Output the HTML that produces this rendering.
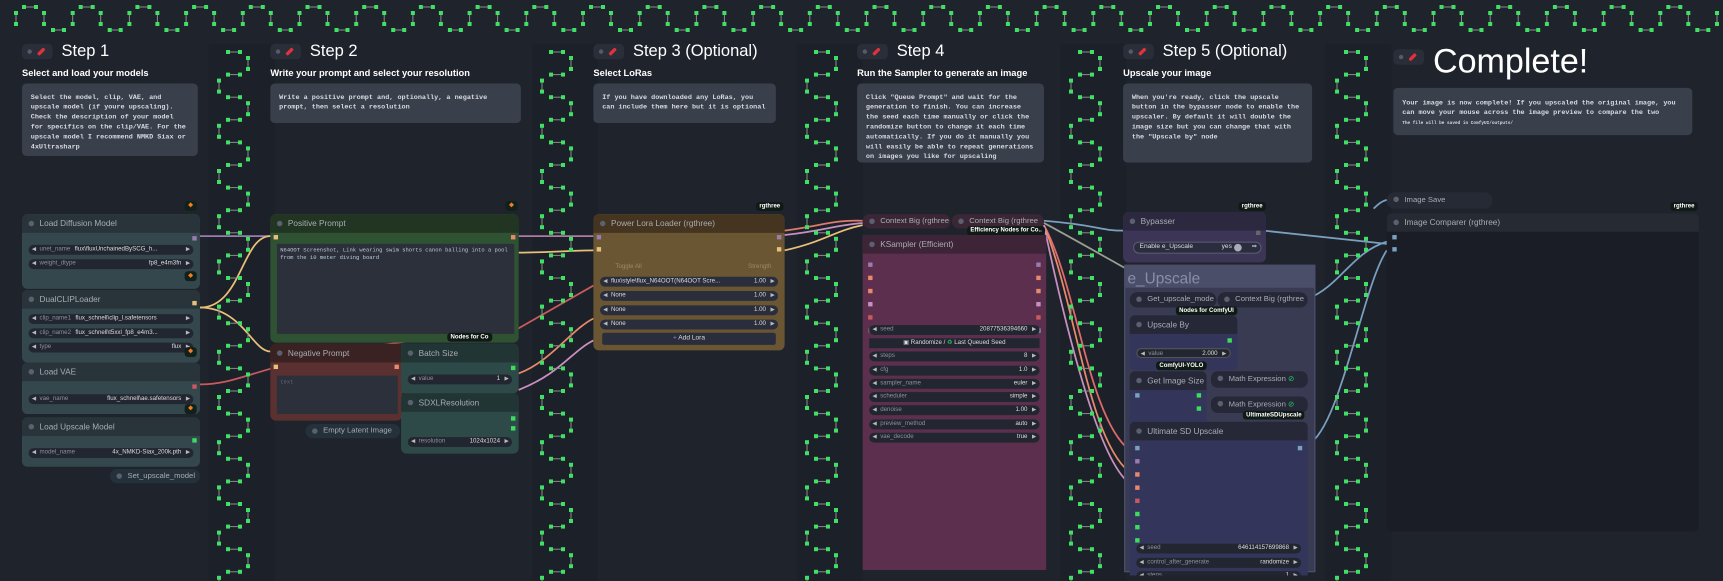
<!DOCTYPE html>
<html><head><meta charset="utf-8">
<style>
*{margin:0;padding:0;box-sizing:border-box}
html,body{width:1723px;height:581px;overflow:hidden;background:#1f232c}
#w{position:absolute;left:0;top:0;width:1568px;height:529px;transform:scale(1.0989,1.0983);transform-origin:0 0;font-family:"Liberation Sans",sans-serif}
.a{position:absolute}
.pill{position:absolute;width:28px;height:14px;background:#2a2e38;border-radius:4px}
.pill:before{content:"";position:absolute;left:5px;top:5px;width:4px;height:4px;border-radius:50%;background:#555b6a}
.pill:after{content:"";position:absolute;left:16px;top:3px;width:3px;height:8px;background:#e0323c;transform:rotate(45deg);border-radius:1px}
.st{position:absolute;color:#fff;font-size:15px}
.sub{position:absolute;color:#fff;font-size:8.5px;font-weight:bold}
.note{position:absolute;background:#3a3f4c;border-radius:4px;color:#d8dae0;font-family:"Liberation Mono",monospace;font-size:6.2px;line-height:9px;padding:8px 8px;font-weight:bold}
.node{position:absolute;border-radius:5px;overflow:hidden}
.hd{height:17px;font-size:7.5px;color:#a8acb4;line-height:17px;padding-left:16px;position:relative;white-space:nowrap}
.hd:before{content:"";position:absolute;left:6px;top:6px;width:5px;height:5px;border-radius:50%;background:#5a6070}
.pl .hd:before{top:4px}
.wd{position:absolute;left:6px;right:6px;height:9px;background:#222630;border-radius:5px;font-size:5.6px;color:#8c909a;line-height:9px;padding:0 10px;white-space:nowrap}
.wd:before{content:"◀";position:absolute;left:3px;font-size:5px;color:#bbb}
.wd:after{content:"▶";position:absolute;right:3px;font-size:5px;color:#bbb}
.wd b{position:absolute;right:11px;color:#ddd;font-weight:normal}
.wd i{font-style:normal;color:#ddd;margin-left:4px}
.sl{position:absolute;width:4px;height:4px}
.tag{position:absolute;background:#0f1a14;color:#fff;font-size:5.5px;border-radius:3px;padding:1px 3px;font-weight:bold}
.fox{position:absolute;width:11px;height:9px;background:#10201a;border-radius:3px;color:#f57c1f;font-size:6px;text-align:center;line-height:9px}
</style></head><body>
<div id="w">
<div class="a" style="left:190px;top:40px;width:60px;height:489px;background:#1c2028"></div>
<div class="a" style="left:484px;top:40px;width:60px;height:489px;background:#1c2028"></div>
<div class="a" style="left:725px;top:40px;width:60px;height:489px;background:#1c2028"></div>
<div class="a" style="left:965px;top:40px;width:60px;height:489px;background:#1c2028"></div>
<div class="a" style="left:1206px;top:40px;width:60px;height:489px;background:#1c2028"></div>

<svg class="a" style="left:0;top:0" width="1568" height="529">
<g fill="none" stroke-width="1.6">
<path d="M182 215 L246 215" stroke="#9a7cb0"/>
<path d="M182 280 C220 280 220 215 246 215" stroke="#e8c07a"/>
<path d="M182 280 C220 280 230 320 246 320" stroke="#e8c07a"/>
<path d="M182 350 C230 350 240 320 470 300 L540 260" stroke="#c85a5e"/>
<path d="M472 215 L540 215" stroke="#b07aa0"/>
<path d="M472 230 C500 230 520 228 540 228" stroke="#e8c07a"/>
<path d="M472 340 C500 330 520 300 540 290" stroke="#e88a6a"/>
<path d="M472 355 C510 340 520 320 540 310" stroke="#c890c0"/>
<path d="M714 210 C750 205 760 200 785 201" stroke="#e07a6a"/>
<path d="M714 214 C750 210 760 205 785 203" stroke="#c890c0"/>
<path d="M714 228 C750 220 760 210 785 205" stroke="#e8c07a"/>
<path d="M950 201 C1000 205 1000 210 1022 210" stroke="#7aa0c0"/>
<path d="M1150 210 L1262 222" stroke="#7aa0c0"/>
<path d="M950 205 C980 260 990 380 1028 410" stroke="#e06a6a"/>
<path d="M950 205 C980 280 990 400 1028 430" stroke="#e88a6a"/>
<path d="M950 205 C970 300 1000 420 1028 440" stroke="#c890c0"/>
<path d="M1190 272 C1220 260 1230 230 1262 220" stroke="#7aa0c0"/>
<path d="M1190 405 C1220 390 1240 260 1262 228" stroke="#7aa0c0"/>
<path d="M1250 190 C1255 185 1258 183 1262 182" stroke="#7aa0c0"/>
<path d="M950 203 C1000 230 1050 260 1090 280" stroke="#9aa090"/>
</g></svg>

<div class="pill" style="left:20px;top:40px"></div><div class="st" style="left:56px;top:38px">Step 1</div>
<div class="sub" style="left:20px;top:61px">Select and load your models</div>
<div class="note" style="left:20px;top:76px;width:160px;height:66px">Select the model, clip, VAE, and upscale model (if youre upscaling). Check the description of your model for specifics on the clip/VAE. For the upscale model I recommend NMKD Siax or 4xUltrasharp</div>

<div class="pill" style="left:246px;top:40px"></div><div class="st" style="left:282px;top:38px">Step 2</div>
<div class="sub" style="left:246px;top:61px">Write your prompt and select your resolution</div>
<div class="note" style="left:246px;top:76px;width:228px;height:36px">Write a positive prompt and, optionally, a negative prompt, then select a resolution</div>

<div class="pill" style="left:540px;top:40px"></div><div class="st" style="left:576px;top:38px">Step 3 (Optional)</div>
<div class="sub" style="left:540px;top:61px">Select LoRas</div>
<div class="note" style="left:540px;top:76px;width:166px;height:36px">If you have downloaded any LoRas, you can include them here but it is optional</div>

<div class="pill" style="left:780px;top:40px"></div><div class="st" style="left:816px;top:38px">Step 4</div>
<div class="sub" style="left:780px;top:61px">Run the Sampler to generate an image</div>
<div class="note" style="left:780px;top:76px;width:170px;height:72px">Click "Queue Prompt" and wait for the generation to finish. You can increase the seed each time manually or click the randomize button to change it each time automatically. If you do it manually you will easily be able to repeat generations on images you like for upscaling</div>

<div class="pill" style="left:1022px;top:40px"></div><div class="st" style="left:1058px;top:38px">Step 5 (Optional)</div>
<div class="sub" style="left:1022px;top:61px">Upscale your image</div>
<div class="note" style="left:1022px;top:76px;width:172px;height:72px">When you're ready, click the upscale button in the bypasser node to enable the upscaler. By default it will double the image size but you can change that with the "Upscale by" node</div>

<div class="pill" style="left:1268px;top:45px"></div><div class="st" style="left:1304px;top:38px;font-size:31px">Complete!</div>
<div class="note" style="left:1268px;top:80px;width:272px;height:43px;padding-top:9px">Your image is now complete! If you upscaled the original image, you can move your mouse across the image preview to compare the two<br><span style="font-size:4px;line-height:6px">The file will be saved in ComfyUI/outputs/</span></div>

<div class="fox" style="left:168px;top:183px">◆</div>
<div class="node" style="left:20px;top:195px;width:162px;height:68px;background:#34474d"><div class="hd" style="background:#283439">Load Diffusion Model</div>
<div class="wd" style="top:28px">unet_name<i>flux\fluxUnchainedBySCG_h...</i></div>
<div class="wd" style="top:41px">weight_dtype<b>fp8_e4m3fn</b></div>
<div class="sl" style="right:3px;top:20px;background:#9a7cb0"></div></div>
<div class="fox" style="left:168px;top:247px">◆</div>
<div class="node" style="left:20px;top:264px;width:162px;height:66px;background:#34474d"><div class="hd" style="background:#283439">DualCLIPLoader</div>
<div class="wd" style="top:22px">clip_name1<i>flux_schnell\clip_l.safetensors</i></div>
<div class="wd" style="top:35px">clip_name2<i>flux_schnell\t5xxl_fp8_e4m3...</i></div>
<div class="wd" style="top:48px">type<b>flux</b></div>
<div class="sl" style="right:3px;top:10px;background:#e8c07a"></div></div>
<div class="fox" style="left:168px;top:316px">◆</div>
<div class="node" style="left:20px;top:330px;width:162px;height:47px;background:#34474d"><div class="hd" style="background:#283439">Load VAE</div>
<div class="wd" style="top:29px">vae_name<b>flux_schnell\ae.safetensors</b></div>
<div class="sl" style="right:3px;top:20px;background:#c85a5e"></div></div>
<div class="fox" style="left:168px;top:368px">◆</div>
<div class="node" style="left:20px;top:380px;width:162px;height:45px;background:#34474d"><div class="hd" style="background:#283439">Load Upscale Model</div>
<div class="wd" style="top:28px">model_name<b>4x_NMKD-Siax_200k.pth</b></div>
<div class="sl" style="right:3px;top:19px;background:#3ddc5f"></div></div>
<div class="node pl" style="left:100px;top:427px;width:82px;height:13px;background:#24303a;border-radius:7px"><div class="hd" style="height:13px;line-height:13px;font-size:7px">Set_upscale_model</div></div>

<div class="fox" style="left:460px;top:183px">◆</div>
<div class="node" style="left:246px;top:195px;width:226px;height:117px;background:#2f5233"><div class="hd" style="background:#223522">Positive Prompt</div>
<div class="sl" style="left:3px;top:19px;background:#e8c07a"></div><div class="sl" style="right:3px;top:19px;background:#e88a6a"></div>
<div class="a" style="left:6px;top:27px;right:4px;bottom:8px;background:#2c303b;color:#bcd;font-family:'Liberation Mono',monospace;font-size:5px;padding:3px 3px;line-height:7px">N64OOT Screenshot, Link wearing swim shorts canon balling into a pool from the 10 meter diving board</div></div>
<div class="tag" style="left:407px;top:303px">Nodes for Co</div>
<div class="node" style="left:246px;top:313px;width:120px;height:70px;background:#5a3030"><div class="hd" style="background:#3a2222">Negative Prompt</div>
<div class="sl" style="left:3px;top:19px;background:#e8c07a"></div><div class="sl" style="right:3px;top:19px;background:#e88a6a"></div>
<div class="a" style="left:6px;top:29px;right:4px;bottom:6px;background:#2c303b;color:#667;font-family:'Liberation Mono',monospace;font-size:5px;padding:3px">text</div></div>
<div class="node" style="left:365px;top:313px;width:107px;height:45px;background:#2e4a48;border-radius:0 5px 5px 0"><div class="hd" style="background:#223535">Batch Size</div>
<div class="wd" style="top:28px">value<b>1</b></div><div class="sl" style="right:3px;top:20px;background:#3ddc5f"></div></div>
<div class="node" style="left:365px;top:358px;width:107px;height:55px;background:#2e4a48"><div class="hd" style="background:#223535">SDXLResolution</div>
<div class="wd" style="top:40px">resolution<b>1024x1024</b></div><div class="sl" style="right:3px;top:21px;background:#3ddc5f"></div><div class="sl" style="right:3px;top:30px;background:#3ddc5f"></div></div>
<div class="node pl" style="left:278px;top:386px;width:86px;height:13px;background:#24303a;border-radius:7px"><div class="hd" style="height:13px;line-height:13px;font-size:7px">Empty Latent Image</div></div>

<div class="tag" style="left:688px;top:184px">rgthree</div>
<div class="node" style="left:540px;top:195px;width:174px;height:124px;background:#6a5632"><div class="hd" style="background:#45341f">Power Lora Loader (rgthree)</div>
<div class="sl" style="left:3px;top:19px;background:#9a7cb0"></div><div class="sl" style="right:3px;top:19px;background:#9a7cb0"></div>
<div class="sl" style="left:3px;top:30px;background:#e8c07a"></div><div class="sl" style="right:3px;top:30px;background:#e8c07a"></div>
<div class="a" style="left:20px;top:45px;font-size:5.6px;color:#9a8a6a">Toggle All</div><div class="a" style="right:12px;top:45px;font-size:5.6px;color:#9a8a6a">Strength</div>
<div class="wd" style="top:57px;background:#2a2e3c;color:#ddd">flux\style\flux_N64OOT(N64OOT Scre...<b>1.00</b></div>
<div class="wd" style="top:70px;background:#2a2e3c;color:#ddd">None<b>1.00</b></div>
<div class="wd" style="top:83px;background:#2a2e3c;color:#ddd">None<b>1.00</b></div>
<div class="wd" style="top:96px;background:#2a2e3c;color:#ddd">None<b>1.00</b></div>
<div class="a" style="left:8px;right:8px;top:108px;height:11px;background:#2a2e3c;border-radius:2px;font-size:6px;color:#ddd;text-align:center;line-height:11px"><span style="color:#9a7ce0">+</span> Add Lora</div></div>

<div class="node pl" style="left:785px;top:195px;width:80px;height:13px;background:#3a2634;border-radius:7px"><div class="hd" style="height:13px;line-height:13px;font-size:7px">Context Big (rgthree</div></div>
<div class="node pl" style="left:866px;top:195px;width:84px;height:13px;background:#3a2634;border-radius:7px"><div class="hd" style="height:13px;line-height:13px;font-size:7px">Context Big (rgthree</div></div>
<div class="tag" style="left:880px;top:206px">Efficiency Nodes for Co..</div>
<div class="node" style="left:785px;top:214px;width:167px;height:305px;background:#5b2f4d;border-radius:0"><div class="hd" style="background:#3d2436">KSampler (Efficient)</div>
<div class="sl" style="left:5px;top:25px;background:#9a7cb0"></div><div class="sl" style="left:5px;top:37px;background:#e88a6a"></div><div class="sl" style="left:5px;top:49px;background:#e88a6a"></div><div class="sl" style="left:5px;top:61px;background:#c890c0"></div><div class="sl" style="left:5px;top:73px;background:#c85a5e"></div><div class="sl" style="left:5px;top:85px;background:#666"></div>
<div class="sl" style="right:5px;top:25px;background:#9a7cb0"></div><div class="sl" style="right:5px;top:37px;background:#e88a6a"></div><div class="sl" style="right:5px;top:49px;background:#e88a6a"></div><div class="sl" style="right:5px;top:61px;background:#c890c0"></div><div class="sl" style="right:5px;top:73px;background:#c85a5e"></div><div class="sl" style="right:5px;top:85px;background:#7aa0c0"></div>
<div class="wd" style="top:82px">seed<b>20877536394660</b></div>
<div class="a" style="left:6px;right:6px;top:94px;height:9px;background:#222630;font-size:5.6px;color:#ddd;text-align:center;line-height:9px">▣ Randomize / <span style="color:#3c6">♻</span> Last Queued Seed</div>
<div class="wd" style="top:106px">steps<b>8</b></div>
<div class="wd" style="top:119px">cfg<b>1.0</b></div>
<div class="wd" style="top:131px">sampler_name<b>euler</b></div>
<div class="wd" style="top:143px">scheduler<b>simple</b></div>
<div class="wd" style="top:155px">denoise<b>1.00</b></div>
<div class="wd" style="top:168px">preview_method<b>auto</b></div>
<div class="wd" style="top:180px">vae_decode<b>true</b></div></div>

<div class="tag" style="left:1127px;top:184px">rgthree</div>
<div class="node" style="left:1022px;top:193px;width:130px;height:46px;background:#3c3556"><div class="hd" style="background:#2c2840">Bypasser</div>
<div class="sl" style="right:5px;top:17px;background:#666"></div>
<div class="a" style="left:9px;top:27px;width:117px;height:11px;border:1px solid #555a70;background:#2a2d3e;border-radius:6px;font-size:6px;color:#ddd;line-height:9px;padding-left:5px">Enable e_Upscale<span style="position:absolute;right:26px;color:#ddd">yes</span><span style="position:absolute;right:17px;top:1px;width:7px;height:7px;border-radius:50%;background:#aab"></span><span style="position:absolute;right:3px;color:#aab">➡</span></div></div>
<div class="a" style="left:1023px;top:241px;width:174px;height:280px;background:#383b52;border:1px solid #4e5270"><div style="height:20px;background:#4a4e68;color:#8a8ea8;font-size:14px;padding-left:2px;line-height:22px">e_Upscale</div></div>
<div class="node pl" style="left:1028px;top:266px;width:79px;height:14px;background:#262838;border-radius:7px"><div class="hd" style="height:14px;line-height:14px;font-size:7px">Get_upscale_mode</div></div>
<div class="node pl" style="left:1108px;top:266px;width:82px;height:14px;background:#262838;border-radius:7px"><div class="hd" style="height:14px;line-height:14px;font-size:7px">Context Big (rgthree</div></div>
<div class="tag" style="left:1070px;top:279px">Nodes for ComfyUI</div>
<div class="node" style="left:1028px;top:287px;width:98px;height:50px;background:#33365a"><div class="hd" style="background:#262838">Upscale By</div>
<div class="sl" style="right:5px;top:21px;background:#3ddc5f"></div>
<div class="wd" style="top:30px;border:1px solid #555">value<b>2.000</b></div></div>
<div class="tag" style="left:1052px;top:329px">ComfyUI-YOLO</div>
<div class="node" style="left:1028px;top:338px;width:70px;height:66px;background:#33365a"><div class="hd" style="background:#262838">Get Image Size</div>
<div class="sl" style="left:5px;top:20px;background:#7aa0c0"></div><div class="sl" style="right:5px;top:20px;background:#3ddc5f"></div><div class="sl" style="right:5px;top:32px;background:#3ddc5f"></div></div>
<div class="node pl" style="left:1102px;top:338px;width:88px;height:15px;background:#262838;border-radius:6px"><div class="hd" style="height:15px;line-height:15px;font-size:7px">Math Expression <span style="color:#2c6">⊘</span></div></div>
<div class="node pl" style="left:1102px;top:361px;width:88px;height:15px;background:#262838;border-radius:6px"><div class="hd" style="height:15px;line-height:15px;font-size:7px">Math Expression <span style="color:#2c6">⊘</span></div></div>
<div class="tag" style="left:1131px;top:374px">UltimateSDUpscale</div>
<div class="node" style="left:1028px;top:384px;width:162px;height:140px;background:#33365a;border-radius:5px 5px 0 0"><div class="hd" style="background:#262838">Ultimate SD Upscale</div>
<div class="sl" style="left:5px;top:22px;background:#7aa0c0"></div><div class="sl" style="left:5px;top:34px;background:#9a7cb0"></div><div class="sl" style="left:5px;top:46px;background:#e88a6a"></div><div class="sl" style="left:5px;top:58px;background:#e88a6a"></div><div class="sl" style="left:5px;top:70px;background:#c85a5e"></div><div class="sl" style="left:5px;top:82px;background:#3ddc5f"></div><div class="sl" style="left:5px;top:94px;background:#3ddc5f"></div><div class="sl" style="left:5px;top:106px;background:#3ddc5f"></div>
<div class="sl" style="right:5px;top:22px;background:#7aa0c0"></div>
<div class="wd" style="top:111px">seed<b>646114157699868</b></div>
<div class="wd" style="top:124px">control_after_generate<b>randomize</b></div>
<div class="wd" style="top:136px">steps<b>1</b></div></div>

<div class="node pl" style="left:1262px;top:175px;width:96px;height:15px;background:#262a34;border-radius:7px"><div class="hd" style="height:15px;line-height:15px;font-size:7px">Image Save</div></div>
<div class="tag" style="left:1520px;top:184px">rgthree</div>
<div class="node" style="left:1262px;top:194px;width:284px;height:290px;background:#1a1d25"><div class="hd" style="background:#262a33">Image Comparer (rgthree)</div>
<div class="sl" style="left:5px;top:20px;background:#7aa0c0"></div><div class="sl" style="left:5px;top:31px;background:#7aa0c0"></div></div>
</div>

<svg id="g" class="a" style="left:0;top:0;position:absolute" width="1723" height="581"></svg>
<script>
var s='',G='#3fe063',L='#8a8f8a';
function sq(x,y){s+='<rect x="'+(x-2)+'" y="'+(y-2)+'" width="4" height="4" fill="'+G+'"/>';}
function ln(x1,y1,x2,y2){s+='<line x1="'+x1+'" y1="'+y1+'" x2="'+x2+'" y2="'+y2+'" stroke="'+L+'" stroke-width="1"/>';}
for(var k=0;k<31;k++){var b=k*56.7;
 ln(b+16,13,b+16,24);sq(b+16,13);sq(b+16,24);
 ln(b+24,7,b+36,7);sq(b+24,7);sq(b+36,7);
 ln(b+44,13,b+44,24);sq(b+44,13);sq(b+44,24);
 ln(b+53,30,b+64,30);sq(b+53,30);sq(b+64,30);}
[219,542,807,1071,1337].forEach(function(L0){
 for(var i=0;i<24;i++){var y=52+22.6*i;
  ln(L0+9,y,L0+21,y);sq(L0+9,y);sq(L0+21,y);
  var vx=(i%2==0)?L0+29:L0;ln(vx,y+6,vx,y+17);sq(vx,y+6);sq(vx,y+17);}});
document.getElementById('g').innerHTML=s;
</script>
</body></html>
